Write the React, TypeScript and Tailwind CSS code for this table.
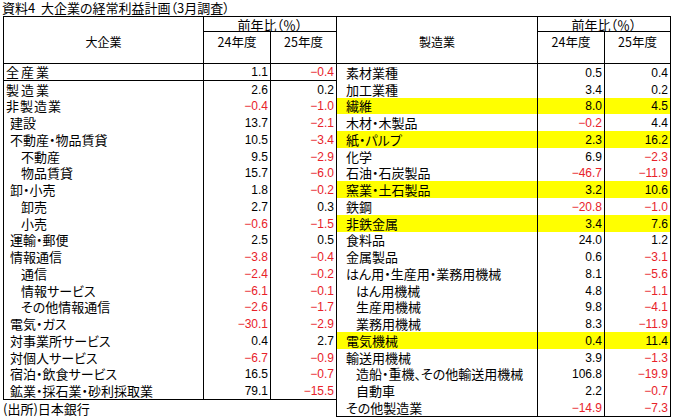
import React from 'react';

interface Row {
  label: string;
  indent: 0 | 1 | 2;
  a: number;
  b: number;
  hl?: boolean;
  line?: boolean;
  wide?: 1 | 2;
}

const largeCorp: Row[] = [
  { label: '全産業', indent: 0, a: 1.1, b: -0.4, line: true, wide: 2 },
  { label: '製造業', indent: 0, a: 2.6, b: 0.2, wide: 2 },
  { label: '非製造業', indent: 0, a: -0.4, b: -1.0, wide: 1 },
  { label: '建設', indent: 1, a: 13.7, b: -2.1 },
  { label: '不動産・物品賃貸', indent: 1, a: 10.5, b: -3.4 },
  { label: '不動産', indent: 2, a: 9.5, b: -2.9 },
  { label: '物品賃貸', indent: 2, a: 15.7, b: -6.0 },
  { label: '卸・小売', indent: 1, a: 1.8, b: -0.2 },
  { label: '卸売', indent: 2, a: 2.7, b: 0.3 },
  { label: '小売', indent: 2, a: -0.6, b: -1.5 },
  { label: '運輸・郵便', indent: 1, a: 2.5, b: 0.5 },
  { label: '情報通信', indent: 1, a: -3.8, b: -0.4 },
  { label: '通信', indent: 2, a: -2.4, b: -0.2 },
  { label: '情報サービス', indent: 2, a: -6.1, b: -0.1 },
  { label: 'その他情報通信', indent: 2, a: -2.6, b: -1.7 },
  { label: '電気・ガス', indent: 1, a: -30.1, b: -2.9 },
  { label: '対事業所サービス', indent: 1, a: 0.4, b: 2.7 },
  { label: '対個人サービス', indent: 1, a: -6.7, b: -0.9 },
  { label: '宿泊・飲食サービス', indent: 1, a: 16.5, b: -0.7 },
  { label: '鉱業・採石業・砂利採取業', indent: 1, a: 79.1, b: -15.5 },
];

const manufacturing: Row[] = [
  { label: '素材業種', indent: 1, a: 0.5, b: 0.4 },
  { label: '加工業種', indent: 1, a: 3.4, b: 0.2 },
  { label: '繊維', indent: 1, a: 8.0, b: 4.5, hl: true },
  { label: '木材・木製品', indent: 1, a: -0.2, b: 4.4 },
  { label: '紙・パルプ', indent: 1, a: 2.3, b: 16.2, hl: true },
  { label: '化学', indent: 1, a: 6.9, b: -2.3 },
  { label: '石油・石炭製品', indent: 1, a: -46.7, b: -11.9 },
  { label: '窯業・土石製品', indent: 1, a: 3.2, b: 10.6, hl: true },
  { label: '鉄鋼', indent: 1, a: -20.8, b: -1.0 },
  { label: '非鉄金属', indent: 1, a: 3.4, b: 7.6, hl: true },
  { label: '食料品', indent: 1, a: 24.0, b: 1.2 },
  { label: '金属製品', indent: 1, a: 0.6, b: -3.1 },
  { label: 'はん用・生産用・業務用機械', indent: 1, a: 8.1, b: -5.6 },
  { label: 'はん用機械', indent: 2, a: 4.8, b: -1.1 },
  { label: '生産用機械', indent: 2, a: 9.8, b: -4.1 },
  { label: '業務用機械', indent: 2, a: 8.3, b: -11.9 },
  { label: '電気機械', indent: 1, a: 0.4, b: 11.4, hl: true },
  { label: '輸送用機械', indent: 1, a: 3.9, b: -1.3 },
  { label: '造船・重機、その他輸送用機械', indent: 2, a: 106.8, b: -19.9 },
  { label: '自動車', indent: 2, a: 2.2, b: -0.7 },
  { label: 'その他製造業', indent: 1, a: -14.9, b: -7.3 },
];

const fmt = (n: number) => (n < 0 ? '\u2212' + Math.abs(n).toFixed(1) : n.toFixed(1));

// indent padding per level (left table sits a little tighter than the right one)
const leftIndent = ['pl-[2px]', 'pl-[6px]', 'pl-[17px]'];
const rightIndent = ['pl-[2px]', 'pl-[9px]', 'pl-[19px]'];
const trackClass = ['', 'tracking-[1px]', 'tracking-[2px]'];

const Num = ({ v, last }: { v: number; last?: boolean }) => (
  <div
    className={`flex items-end justify-end pr-[2px] pb-[1px] text-[12px] leading-[14px] font-['Liberation_Sans',Arial,sans-serif] ${
      last ? 'w-[65px]' : 'w-[67px] border-r border-black'
    } ${v < 0 ? 'text-[#e8222a]' : 'text-black'}`}
  >
    {fmt(v)}
  </div>
);

const Table = ({
  title,
  rows,
  labelW,
  indents,
}: {
  title: string;
  rows: Row[];
  labelW: string;
  indents: string[];
}) => (
  <div className="border border-black bg-white">
    {/* header */}
    <div className="flex h-[47px] border-b border-black">
      <div className={`${labelW} border-r border-black flex justify-center pt-[17px] text-[12px] leading-[16px]`}>
        {title}
      </div>
      <div className="flex flex-col">
        <div className="h-[15px] border-b border-black flex items-center justify-center text-[13px] leading-[15px]">
          前年比（％）
        </div>
        <div className="flex flex-1">
          <div className="w-[67px] border-r border-black flex justify-center pt-[2px] text-[12.5px] leading-[16px]">
            24年度
          </div>
          <div className="w-[65px] flex justify-center pt-[2px] text-[12.5px] leading-[16px]">25年度</div>
        </div>
      </div>
    </div>
    {/* rows */}
    {rows.map((r) => (
      <div
        key={r.label}
        className={`flex h-[16.75px] ${r.hl ? 'bg-[#ffff00]' : ''} ${r.line ? 'border-b border-black' : ''}`}
      >
        <div
          className={`${labelW} border-r border-black flex items-end pb-[1px] text-[13px] leading-[15px] whitespace-nowrap ${
            indents[r.indent]
          } ${trackClass[r.wide ?? 0]}`}
        >
          {r.label}
        </div>
        <Num v={r.a} />
        <Num v={r.b} last />
      </div>
    ))}
  </div>
);

export default function App() {
  return (
    <div className="w-[673px] h-[418px] overflow-hidden bg-white text-black font-['Noto_Sans_CJK_JP',sans-serif] [font-feature-settings:'palt']">
      <div className="h-[16px] pl-[2px] text-[13px] leading-[16px] whitespace-nowrap">
        資料4&nbsp;&nbsp;大企業の経常利益計画（3月調査）
      </div>
      <div className="flex pl-[3px] items-start">
        <div className="flex flex-col">
          <Table title="大企業" rows={largeCorp} labelW="w-[200px]" indents={leftIndent} />
          <div className="h-[17px] text-[13px] leading-[17px]">(出所)日本銀行</div>
        </div>
        <div className="-ml-px">
          <Table title="製造業" rows={manufacturing} labelW="w-[201px]" indents={rightIndent} />
        </div>
      </div>
    </div>
  );
}
